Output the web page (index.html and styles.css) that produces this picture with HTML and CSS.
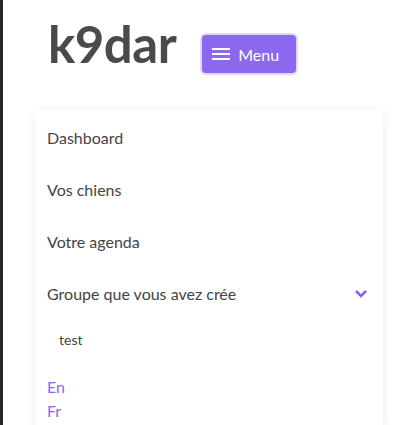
FILE: index.html
```html
<!DOCTYPE html>
<html lang="fr">
<head>
    <meta charset="UTF-8">
    <meta name="viewport" content="width=device-width, initial-scale=1.0">
    <title>k9dar</title>
    <link rel="stylesheet" href="styles.css">
</head>
<body>
    <div class="page">
        <div class="header">
            <h1 class="brand">k9dar</h1>
            <button class="menu-btn">
                <svg width="18" height="14" viewBox="0 0 18 14">
                    <path d="M0 2h18M0 7h18M0 12h18" stroke="#fff" stroke-width="2"/>
                </svg>
                Menu
            </button>
        </div>

        <div class="nav-card">
            <a class="nav-item">Dashboard</a>
            <a class="nav-item">Vos chiens</a>
            <a class="nav-item">Votre agenda</a>
            <a class="nav-item dropdown">
                Groupe que vous avez crée
                <svg width="14" height="9" viewBox="0 0 14 9">
                    <path d="M2 2l5 5 5-5" stroke="#8b5cf6" stroke-width="2.6" fill="none"/>
                </svg>
            </a>
            <a class="sub-item">test</a>
            <div class="langs">
                <a>En</a>
                <a>Fr</a>
            </div>
        </div>
    </div>
</body>
</html>
```

FILE: styles.css
```css
body {
    margin: 0;
    font-family: Lato, "Noto Sans", sans-serif;
    background-color: #ffffff;
    color: #444444;
}
.page {
    border-left: 3px solid #262626;
    min-height: 425px;
    box-sizing: border-box;
    overflow: hidden;
}
.header {
    display: flex;
    align-items: flex-start;
    padding: 12px 0 0 45px;
    height: 72px;
    box-sizing: border-box;
}
.brand {
    margin: 0;
    font-size: 51px;
    line-height: 64px;
    font-weight: bold;
    color: #4a4a4a;
    letter-spacing: -0.5px;
}
.menu-btn {
    display: flex;
    align-items: center;
    gap: 8px;
    margin: 23px 0 0 26px;
    padding: 0 17px 0 10px;
    height: 38px;
    font-family: inherit;
    font-size: 16px;
    color: #ffffff;
    background-color: #8b68ee;
    border: none;
    border-radius: 4px;
    box-shadow: 0 0 0 2px #e1d8fc;
}
.nav-card {
    margin: 38px 28px 0 32px;
    padding-top: 1px;
    background-color: #ffffff;
    box-shadow: 0 2px 12px rgba(0, 0, 0, 0.08);
    border-radius: 2px;
}
.nav-item {
    display: flex;
    align-items: center;
    justify-content: space-between;
    height: 52px;
    padding: 0 15px 0 12px;
    font-size: 16px;
    color: #444444;
}
.sub-item {
    display: block;
    padding: 6px 24px 0;
    height: 30px;
    line-height: 30px;
    font-size: 14px;
    color: #444444;
}
.langs {
    display: flex;
    flex-direction: column;
    padding: 20px 12px 10px;
}
.langs a {
    line-height: 24px;
    font-size: 16px;
    color: #8b67ee;
}
```
